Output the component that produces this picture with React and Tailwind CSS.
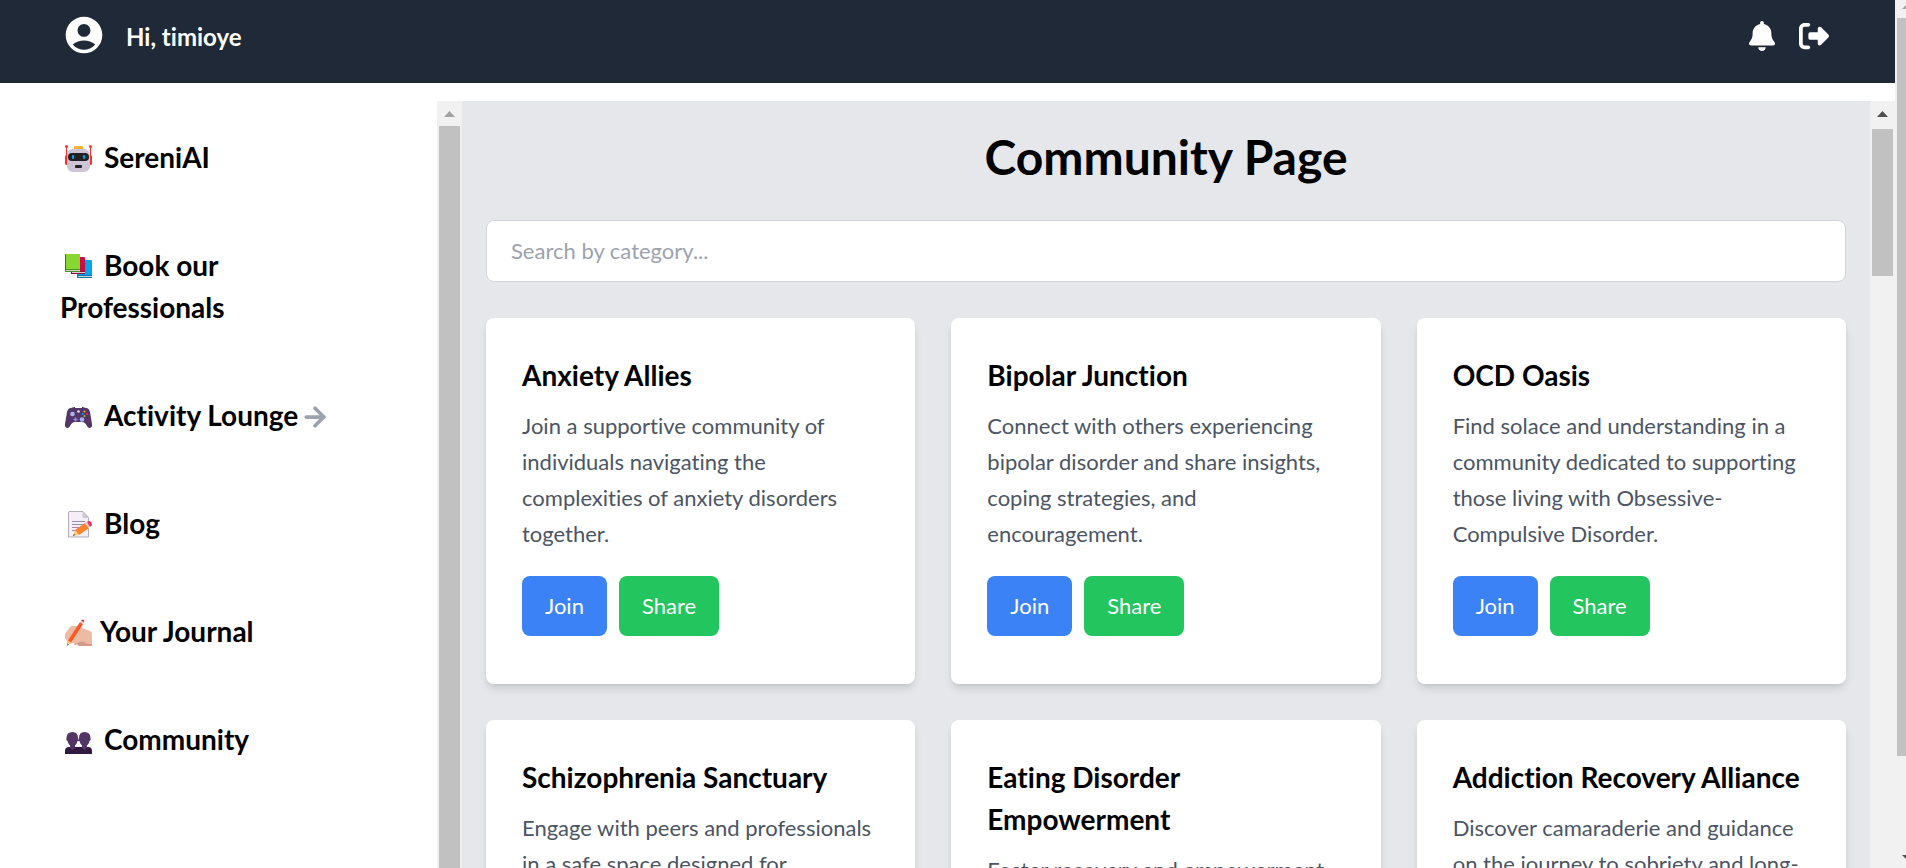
import React from "react";
import { FaBell, FaRightFromBracket } from "react-icons/fa6";
import { MdAccountCircle } from "react-icons/md";
import { FiArrowRight } from "react-icons/fi";

const RobotIcon = () => (
  <svg viewBox="0 0 27 27" className="h-full w-full">
    <path d="M1.5 2v17M25.500 2v17" stroke="#f8312f" strokeWidth="1" />
    <circle cx="1.500" cy="1.500" r="1.500" fill="#f8312f" />
    <circle cx="25.500" cy="1.500" r="1.500" fill="#f8312f" />
    <rect x="0" y="10" width="3" height="10" rx="1.500" fill="#f8312f" />
    <rect x="24" y="10" width="3" height="10" rx="1.500" fill="#f8312f" />
    <rect x="9" y="1" width="9" height="4" rx="1" fill="#ffb02e" />
    <rect x="2" y="4" width="23" height="23" rx="6" fill="#cdc4d6" />
    <rect x="3" y="8" width="21" height="8" rx="4" fill="#212121" />
    <rect x="7" y="10" width="2" height="4" rx="1" fill="#00a6ed" />
    <rect x="18" y="10" width="2" height="4" rx="1" fill="#00a6ed" />
    <rect x="10" y="20" width="7" height="3" rx="1" fill="#212121" />
  </svg>
);

const BooksIcon = () => (
  <svg viewBox="0 0 27 27" className="h-full w-full">
    <rect x="12" y="7" width="15" height="18" rx="1" fill="#00a6ed" />
    <rect x="12" y="22" width="15" height="3" fill="#0074ba" />
    <rect x="13" y="23" width="14" height="1" fill="#d3d3d3" />
    <rect x="6" y="4" width="14" height="17" rx="1" fill="#ca0b4a" />
    <rect x="6" y="18" width="14" height="3" fill="#990838" />
    <rect x="7" y="19" width="13" height="1" fill="#d3d3d3" />
    <rect x="0" y="1" width="15" height="18" rx="1" fill="#86d72f" />
    <path d="M0 2q0-1 1-1v16H0z" fill="#008463" />
    <rect x="0" y="16" width="15" height="3" rx="1" fill="#44911b" />
    <rect x="1" y="17" width="14" height="1" fill="#d3d3d3" />
  </svg>
);

const GamepadIcon = () => (
  <svg viewBox="0 0 27 27" className="h-full w-full">
    <path d="M6 5l4-1v2H6zM17 4l4 1v1h-4z" fill="#212121" />
    <path
      d="M6 5h15q3 0 4 4l2 12q.500 4-2.500 4-1.500 0-2.500-2-2-4-5-4h-7q-3 0-5 4-1 2-2.500 2-3 0-2.500-4L2 9q1-4 4-4z"
      fill="#533566"
    />
    <circle cx="7.500" cy="11" r="2.300" fill="#aeb3f0" />
    <circle cx="17" cy="16.500" r="2.300" fill="#aeb3f0" />
    <path d="M10.500 14.500v4M8.500 16.500h4" stroke="#8d8be0" strokeWidth="1.500" />
    <circle cx="13.500" cy="8.500" r="1.300" fill="#e6e6e6" />
    <circle cx="19.500" cy="8.500" r="1" fill="#ffb02e" />
    <circle cx="17.500" cy="11" r="1" fill="#00a6ed" />
    <circle cx="22" cy="11" r="1" fill="#f8312f" />
    <circle cx="19.500" cy="13" r="1" fill="#86d72f" />
  </svg>
);

const MemoIcon = () => (
  <svg viewBox="0 0 27 27" className="h-full w-full">
    <path d="M4 .5h14l5.500 6V26h-20V1z" fill="#f3eef8" stroke="#b4acbc" />
    <path d="M17.500.5l6 6.500h-5q-1 0-1-1z" fill="#cdc4d6" />
    <path d="M7 10.500h13M7 13.500h13M7 16.500h9M7 19.500h4" stroke="#998ea4" />
    <path d="M8 25l2-6 4 5z" fill="#ffce7c" />
    <path d="M8 25l1-2 1 1z" fill="#212121" />
    <path d="M10 19l10-7 4 5-10 7z" fill="#ff822d" />
    <path d="M20 12l2-1 3 4.500-1.500 1.500z" fill="#d3d3d3" />
    <path d="M22 11q2-2 4 0 2 3 0 4l-1 1z" fill="#f92f60" />
  </svg>
);

const WritingHandIcon = () => (
  <svg viewBox="0 0 27 27" className="h-full w-full">
    <path
      d="M8 7h5q3 0 4 2l8 3q2 1 2 3v12H14l-2-2-2 1-1-2-5 1-4-6q-1-2 0-4l5-7q1-1 3-1z"
      fill="#edbba4"
    />
    <path d="M12 24q5-2 7-1 3 3 8 2v2H14l-2-2-2 1-1-1z" fill="#d29985" />
    <path d="M3 22l1 3-2 2z" fill="#212121" />
    <path d="M3 21l3 2-3.500 3z" fill="#ffce7c" />
    <path d="M3 21.500L15 3l3 2L6 23.500z" fill="#ff5722" />
    <path d="M15 3l1-1.500 3 2L18 5z" fill="#d3d3d3" />
    <path d="M16 1.500q2-2 3 0 .500 1 0 2z" fill="#f8312f" />
  </svg>
);

const PeopleIcon = () => (
  <svg viewBox="0 0 27 27" className="h-full w-full">
    <path d="M0 27v-3q0-4 4-4h19q4 0 4 4v3z" fill="#321b41" />
    <path d="M5 17h5v4l-2.500 2L5 21zM17 17h5v4l-2.500 2-2.500-2z" fill="#533566" />
    <path
      d="M7.500 5q5.500 0 5.500 6 1 2-.5 3-1 5-5 5t-5-5q-2-1-1-3 0-6 6-6zM19.500 5q6 0 6 6 1 2-1 3-1 5-5 5t-5-5q-1.500-1-.5-3 0-6 5.500-6z"
      fill="#533566"
    />
    <path d="M12 13h3v1h-3z" fill="#533566" />
  </svg>
);

const navItems = [
  { label: "SereniAI", icon: RobotIcon },
  { label: "Book our Professionals", icon: BooksIcon },
  { label: "Activity Lounge", icon: GamepadIcon, arrow: true },
  { label: "Blog", icon: MemoIcon },
  { label: "Your Journal", icon: WritingHandIcon, tight: true },
  { label: "Community", icon: PeopleIcon },
];

const communities = [
  {
    name: "Anxiety Allies",
    description:
      "Join a supportive community of individuals navigating the complexities of anxiety disorders together.",
  },
  {
    name: "Bipolar Junction",
    description:
      "Connect with others experiencing bipolar disorder and share insights, coping strategies, and encouragement.",
  },
  {
    name: "OCD Oasis",
    description:
      "Find solace and understanding in a community dedicated to supporting those living with Obsessive-Compulsive Disorder.",
  },
  {
    name: "Schizophrenia Sanctuary",
    description: "Engage with peers and professionals in a safe space designed for",
  },
  {
    name: "Eating Disorder Empowerment",
    description: "Foster recovery and empowerment",
  },
  {
    name: "Addiction Recovery Alliance",
    description: "Discover camaraderie and guidance on the journey to sobriety and long-",
  },
];

const Header = () => (
  <header className="flex h-[83px] shrink-0 items-start justify-between bg-[#1f2937] pt-[13px] pr-[66px] pl-[62px] text-white">
    <div className="flex items-center gap-5">
      <MdAccountCircle size={44} />
      <p className="pt-1 text-2xl font-bold">Hi, timioye</p>
    </div>
    <div className="flex items-center gap-[22px] pt-2">
      <button aria-label="Notifications">
        <FaBell size={30} />
      </button>
      <button aria-label="Log out">
        <FaRightFromBracket size={30} />
      </button>
    </div>
  </header>
);

const Sidebar = () => (
  <nav className="min-w-0 flex-1 px-[60px] pt-[35px]">
    <ul className="flex flex-col gap-[66px]">
      {navItems.map(({ label, icon: Icon, arrow, tight }) => (
        <li key={label} className="text-[28px] leading-[42px] font-bold">
          <a href="#">
            <span
              className={`ml-[5px] inline-block h-[27px] w-[27px] align-[-4px] ${tight ? "mr-2" : "mr-3"}`}
            >
              <Icon />
            </span>
            {label}
            {arrow && (
              <FiArrowRight size={30} strokeWidth={3} className="ml-[2px] inline align-[-6px] text-[#9ca3af]" />
            )}
          </a>
        </li>
      ))}
    </ul>
  </nav>
);

const CommunityCard = ({ name, description }) => (
  <div className="rounded-lg bg-white p-9 shadow-[0_6px_9px_-1px_rgba(0,0,0,0.1),0_3px_6px_-3px_rgba(0,0,0,0.1)]">
    <h2 className="mb-3 text-[28px] leading-[42px] font-bold">{name}</h2>
    <p className="mb-6 text-[22px] leading-9 text-[#4b5563]">{description}</p>
    <div className="mb-3 flex gap-3">
      <button className="rounded-lg bg-[#3b82f6] px-[23px] py-3 text-[22px] leading-9 text-white">Join</button>
      <button className="rounded-lg bg-[#22c55e] px-[23px] py-3 text-[22px] leading-9 text-white">Share</button>
    </div>
  </div>
);

export default function App() {
  return (
    <div className="flex h-screen overflow-hidden bg-white font-['Lato',sans-serif] text-black [font-variant-ligatures:no-common-ligatures]">
      <div className="flex min-w-0 flex-1 flex-col">
        <Header />
        <div className="mt-[18px] flex min-h-0 flex-1">
          <aside className="flex w-[462px] shrink-0">
            <Sidebar />
            {/* Sidebar scroll track */}
            <div className="flex w-[25px] flex-col items-center bg-[#f1f1f1]">
              <svg viewBox="0 0 11 6" className="mt-[10px] mb-[9px] h-[6px] w-[11px]">
                <path d="M5.500 0L11 6H0z" fill="#a3a3a3" />
              </svg>
              <div className="w-[21px] flex-1 bg-[#c1c1c1]" />
            </div>
          </aside>

          <main className="min-w-0 flex-1 overflow-hidden bg-[#e5e7eb] px-6 pt-[29px]">
            <h1 className="mb-9 text-center text-5xl leading-[54px] font-bold">Community Page</h1>
            <input
              type="text"
              aria-label="Search by category"
              placeholder="Search by category..."
              className="mb-9 block h-[62px] w-full rounded-lg border border-[#d1d5db] bg-white px-6 pb-[2px] text-[22px] placeholder:text-[#9ca3af]"
            />
            <div className="grid grid-cols-3 gap-9">
              {communities.map((community) => (
                <CommunityCard key={community.name} {...community} />
              ))}
            </div>
          </main>

          {/* Content scroll track */}
          <div className="flex w-[25px] shrink-0 flex-col items-center bg-[#f1f1f1]">
            <svg viewBox="0 0 11 6" className="mt-[10px] mb-3 h-[6px] w-[11px]">
              <path d="M5.500 0L11 6H0z" fill="#505050" />
            </svg>
            <div className="h-[147px] w-[21px] bg-[#c1c1c1]" />
          </div>
        </div>
      </div>

      {/* Window scroll track */}
      <div className="flex w-[11px] shrink-0 flex-col overflow-hidden bg-[#f1f1f1] pl-[2px]">
        <svg viewBox="0 0 9 18" className="h-[18px] w-[9px] shrink-0">
          <path d="M5 9l5-5v5z" fill="#a3a3a3" />
        </svg>
        <div className="h-[85%] w-full bg-[#c1c1c1]" />
        <svg viewBox="0 0 9 18" className="mt-auto h-[18px] w-[9px] shrink-0">
          <path d="M5 5l5 5V5z" fill="#505050" />
        </svg>
      </div>
    </div>
  );
}
